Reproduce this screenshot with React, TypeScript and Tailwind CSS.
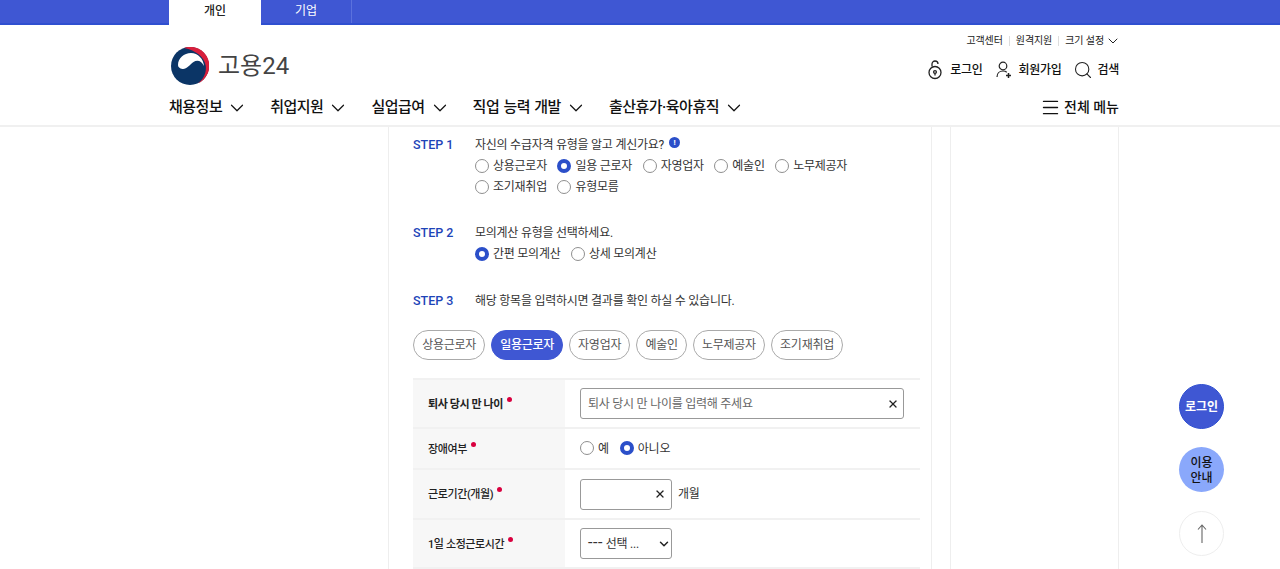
import { ChevronDown, Menu, Search, X } from "lucide-react";

const font = "font-['Roboto','Noto_Sans_CJK_KR',sans-serif]";

const navItems = ["채용정보", "취업지원", "실업급여", "직업 능력 개발", "출산휴가·육아휴직"];
const pills = ["상용근로자", "일용근로자", "자영업자", "예술인", "노무제공자", "조기재취업"];

const Emblem = () => (
  <svg width="38" height="38" viewBox="0 0 38 38">
    <circle cx="19" cy="19" r="19" fill="#0b3566" />
    <path d="M13 1A19 19 0 0 1 27 36.300C32.500 32 35.500 26 34.800 19C33.500 10 25 3.500 13 1Z" fill="#d81f3c" />
    <path d="M7 18C7 11 13 6 20 6C27 6 32.500 12 33 19C30.500 13.500 26 12.500 22.500 15C18.500 18 15.500 22.500 11.500 22C8.500 21.500 7 20 7 18Z" fill="#fff" />
  </svg>
);

const Radio = ({ label, checked = false }: { label: string; checked?: boolean }) => (
  <span className="flex items-center gap-[4px]">
    {checked ? (
      <span className="mb-[2px] h-[14px] w-[14px] rounded-full border-[4px] border-[#2b4fc9] bg-white" />
    ) : (
      <span className="mb-[2px] h-[14px] w-[14px] rounded-full border border-[#8f8f8f] bg-white" />
    )}
    <span>{label}</span>
  </span>
);

const Required = () => <span className="mb-[12px] ml-[4px] h-[5px] w-[5px] rounded-full bg-[#d9003f]" />;

const Row = ({ label, bold = false, h, children }: { label: string; bold?: boolean; h: string; children: React.ReactNode }) => (
  <div className={`flex border-b-[2px] border-[#f1f1f1] ${h}`}>
    <div className={`flex w-[152px] items-center bg-[#f7f7f7] pl-[15px] pt-[3px] text-[11px] tracking-[-0.4px] text-[#222] ${bold ? "font-bold" : "font-medium"}`}>
      {label}
      <Required />
    </div>
    <div className="flex flex-1 items-center pl-[15px]">{children}</div>
  </div>
);

const StepLabel = ({ children }: { children: React.ReactNode }) => (
  <span className="w-[62px] text-[12.5px] font-medium leading-[18px] tracking-normal text-[#1e44b8]">{children}</span>
);

export default function App() {
  return (
    <div className={`relative h-[569px] w-[1280px] overflow-hidden bg-white text-[#333] ${font}`}>
      {/* top tabs */}
      <div className="h-[25px] border-b-[2px] border-[#2f4fd0] bg-[#3f57d3] pl-[169px]">
        <div className="flex h-[25px] text-[12px]">
          <div className="flex w-[92px] items-center justify-center bg-white pb-[3px] font-medium text-[#222]">개인</div>
          <div className="flex h-[23px] w-[91px] items-center justify-center border-r border-[#5b71dd] pb-[1px] text-white">기업</div>
        </div>
      </div>

      {/* header */}
      <header className="h-[102px] border-b-[2px] border-[#f0f0f0]">
        <div className="ml-[169px] flex h-full w-[950px] flex-col">
          <div className="flex h-[69px] justify-between">
            <div className="flex items-center gap-[9px] pl-[2px] pt-[13px]">
              <Emblem />
              <span className="text-[24px] leading-none text-[#444]">고용24</span>
            </div>
            <div className="flex flex-col items-end">
              <div className="mt-[8px] flex h-[15px] items-center text-[10px] tracking-[-0.1px] text-[#222]">
                <span>고객센터</span>
                <span className="mx-[6px] h-[10px] w-px bg-[#ddd]" />
                <span>원격지원</span>
                <span className="mx-[6px] h-[10px] w-px bg-[#ddd]" />
                <span>크기 설정</span>
                <ChevronDown size={16} strokeWidth={1.5} className="-mr-[2px] ml-[1px]" />
              </div>
              <div className="mt-[12px] flex h-[20px] items-center text-[12px] font-medium tracking-[-0.3px] text-[#111]">
                <svg width="16" height="20" viewBox="0 0 16 20" fill="none" stroke="#222" strokeWidth="1.3" className="mr-[7.5px]">
                  <circle cx="8" cy="12.500" r="6" />
                  <circle cx="8" cy="12" r="1.4" />
                  <path d="M8 13.500v2M5 6.500V4a3 3 0 0 1 6 0" />
                </svg>
                <span>로그인</span>
                <svg width="16" height="18" viewBox="0 0 16 18" fill="none" stroke="#222" strokeWidth="1.2" className="ml-[13px] mr-[7px]">
                  <circle cx="7" cy="5" r="3.8" />
                  <path d="M1 16c0-3.500 2.500-6 6-6 1.500 0 2.800.4 3.800 1.200" />
                  <path d="M12.500 12v5M10 14.500h5" strokeWidth="1.5" />
                </svg>
                <span>회원가입</span>
                <Search size={20} strokeWidth={1.3} className="ml-[11.5px] mr-[4.5px] text-[#222]" />
                <span>검색</span>
              </div>
            </div>
          </div>
          <nav className="flex h-[31px] items-center justify-between pb-[4px]">
            <div className="flex text-[15px] font-medium tracking-[-0.5px] text-[#111] [word-spacing:1px]">
              {navItems.map((item) => (
                <span key={item} className="mr-[22px] flex items-center gap-[4px]">
                  {item}
                  <ChevronDown size={22} strokeWidth={1.3} />
                </span>
              ))}
            </div>
            <span className="flex items-center gap-[3px] text-[14px] font-medium text-[#111]">
              <Menu size={21} strokeWidth={1.6} />
              전체 메뉴
            </span>
          </nav>
        </div>
      </header>

      {/* body */}
      <main className="ml-[388px] flex h-[442px] gap-[18px]">
        <section className="w-[544px] border-x border-[#eee] pl-[24px] pr-[11px] pt-[9px] text-[12px] tracking-[-0.25px]">
          <div className="flex">
            <StepLabel>STEP 1</StepLabel>
            <div>
              <div className="flex items-start leading-[18px]">
                자신의 수급자격 유형을 알고 계신가요?
                <span className="ml-[5px] mt-[1px] flex h-[11px] w-[11px] items-center justify-center rounded-full bg-[#2b4fc9] text-[8px] font-bold leading-none text-white">!</span>
              </div>
              <div className="mt-[2px] flex gap-x-[10.5px] leading-[21px]">
                <Radio label="상용근로자" />
                <Radio label="일용 근로자" checked />
                <Radio label="자영업자" />
                <Radio label="예술인" />
                <Radio label="노무제공자" />
              </div>
              <div className="flex gap-x-[10.5px] leading-[21px]">
                <Radio label="조기재취업" />
                <Radio label="유형모름" />
              </div>
            </div>
          </div>

          <div className="mt-[26px] flex">
            <StepLabel>STEP 2</StepLabel>
            <div>
              <div className="leading-[18px]">모의계산 유형을 선택하세요.</div>
              <div className="mt-[2px] flex gap-x-[10.5px] leading-[21px]">
                <Radio label="간편 모의계산" checked />
                <Radio label="상세 모의계산" />
              </div>
            </div>
          </div>

          <div className="mt-[27px] flex">
            <StepLabel>STEP 3</StepLabel>
            <div className="leading-[18px]">해당 항목을 입력하시면 결과를 확인 하실 수 있습니다.</div>
          </div>

          <div className="mt-[20px] flex gap-[5.8px]">
            {pills.map((p) => (
              <span
                key={p}
                className={
                  p === "일용근로자"
                    ? "flex h-[30px] items-center rounded-full border border-[#3f57d3] bg-[#3f57d3] px-[8px] font-medium text-white"
                    : "flex h-[30px] items-center rounded-full border border-[#aaa] px-[8.2px] text-[#555]"
                }
              >
                {p}
              </span>
            ))}
          </div>

          <div className="mt-[18px] border-t-[2px] border-[#f1f1f1]">
            <Row label="퇴사 당시 만 나이" bold h="h-[49px]">
              <div className="flex h-[31px] w-[324px] items-center justify-between rounded-[3px] border border-[#999] pl-[7px] pr-[4.5px] text-[#666]">
                퇴사 당시 만 나이를 입력해 주세요
                <X size={12} strokeWidth={2.6} className="text-[#222]" />
              </div>
            </Row>
            <Row label="장애여부" h="h-[41px]">
              <div className="flex gap-[11px]">
                <Radio label="예" />
                <Radio label="아니오" checked />
              </div>
            </Row>
            <Row label="근로기간(개월)" h="h-[50px]">
              <div className="flex h-[31px] w-[92px] items-center justify-end rounded-[3px] border border-[#999] pr-[5px]">
                <X size={12} strokeWidth={2.6} className="text-[#222]" />
              </div>
              <span className="ml-[6px]">개월</span>
            </Row>
            <Row label="1일 소정근로시간" h="h-[49px]">
              <div className="flex h-[31px] w-[92px] items-center justify-between rounded-[3px] border border-[#999] pl-[7px]">
                <span>
                  <span className="text-[16px] leading-none tracking-[0.6px]">---</span> 선택 ...
                </span>
                <ChevronDown size={14} strokeWidth={2.5} className="text-[#222]" />
              </div>
            </Row>
          </div>
        </section>
        <aside className="w-[169px] border-x border-[#eee]" />
      </main>

      {/* floating buttons */}
      <div className="absolute left-[1179px] top-[384px] flex flex-col text-[12px] font-medium">
        <span className="flex h-[45px] w-[45px] items-center justify-center rounded-full border border-[#2f4fd0] bg-[#3f57d3] font-bold text-white">로그인</span>
        <span className="mt-[18px] flex h-[45px] w-[45px] items-center justify-center rounded-full bg-[#8aa8fb] pt-[3px] text-center leading-[15px] text-[#111]">
          이용
          <br />
          안내
        </span>
        <span className="mt-[19px] flex h-[45px] w-[45px] items-center justify-center rounded-full border border-[#eee] bg-white">
          <svg width="12" height="20" viewBox="0 0 12 20" fill="none" stroke="#666" strokeWidth="1.1">
            <path d="M6 19V1M2 5.500L6 1l4 4.500" />
          </svg>
        </span>
      </div>
    </div>
  );
}
